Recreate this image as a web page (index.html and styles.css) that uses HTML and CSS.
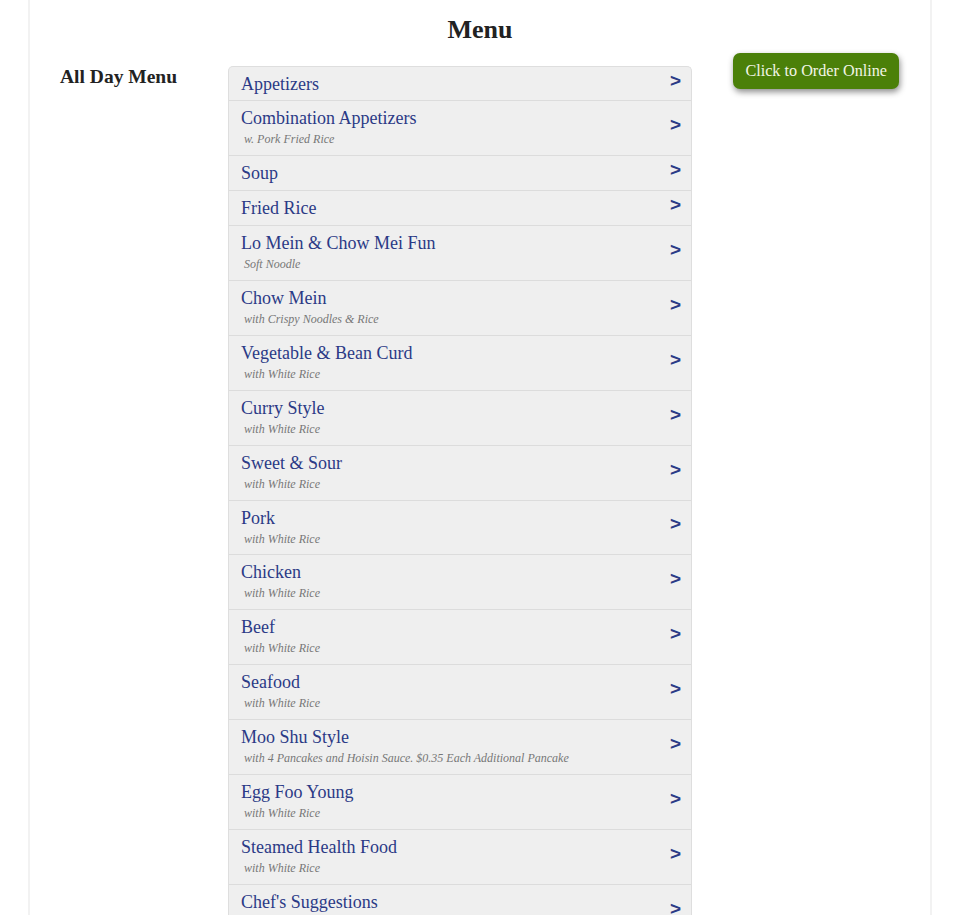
FILE: index.html
```html
<!DOCTYPE html>
<html>
<head>
<meta charset="utf-8">
<link rel="stylesheet" href="styles.css">
</head>
<body>
<div class="page">
  <h1 class="title">Menu</h1>
  <div class="layout">
    <div class="side"><h2 class="side-title">All Day Menu</h2></div>
    <ul class="list">
      <li class="row"><div class="info"><div class="name">Appetizers</div></div><span class="arrow">&gt;</span></li>
      <li class="row"><div class="info"><div class="name">Combination Appetizers</div><div class="sub">w. Pork Fried Rice</div></div><span class="arrow">&gt;</span></li>
      <li class="row"><div class="info"><div class="name">Soup</div></div><span class="arrow">&gt;</span></li>
      <li class="row"><div class="info"><div class="name">Fried Rice</div></div><span class="arrow">&gt;</span></li>
      <li class="row"><div class="info"><div class="name">Lo Mein &amp; Chow Mei Fun</div><div class="sub">Soft Noodle</div></div><span class="arrow">&gt;</span></li>
      <li class="row"><div class="info"><div class="name">Chow Mein</div><div class="sub">with Crispy Noodles &amp; Rice</div></div><span class="arrow">&gt;</span></li>
      <li class="row"><div class="info"><div class="name">Vegetable &amp; Bean Curd</div><div class="sub">with White Rice</div></div><span class="arrow">&gt;</span></li>
      <li class="row"><div class="info"><div class="name">Curry Style</div><div class="sub">with White Rice</div></div><span class="arrow">&gt;</span></li>
      <li class="row"><div class="info"><div class="name">Sweet &amp; Sour</div><div class="sub">with White Rice</div></div><span class="arrow">&gt;</span></li>
      <li class="row"><div class="info"><div class="name">Pork</div><div class="sub">with White Rice</div></div><span class="arrow">&gt;</span></li>
      <li class="row"><div class="info"><div class="name">Chicken</div><div class="sub">with White Rice</div></div><span class="arrow">&gt;</span></li>
      <li class="row"><div class="info"><div class="name">Beef</div><div class="sub">with White Rice</div></div><span class="arrow">&gt;</span></li>
      <li class="row"><div class="info"><div class="name">Seafood</div><div class="sub">with White Rice</div></div><span class="arrow">&gt;</span></li>
      <li class="row"><div class="info"><div class="name">Moo Shu Style</div><div class="sub">with 4 Pancakes and Hoisin Sauce. $0.35 Each Additional Pancake</div></div><span class="arrow">&gt;</span></li>
      <li class="row"><div class="info"><div class="name">Egg Foo Young</div><div class="sub">with White Rice</div></div><span class="arrow">&gt;</span></li>
      <li class="row"><div class="info"><div class="name">Steamed Health Food</div><div class="sub">with White Rice</div></div><span class="arrow">&gt;</span></li>
      <li class="row"><div class="info"><div class="name">Chef's Suggestions</div><div class="sub">with White Rice</div></div><span class="arrow">&gt;</span></li>
    </ul>
    <div class="aside"><a class="order-btn" href="#">Click to Order Online</a></div>
  </div>
</div>
</body>
</html>
```

FILE: styles.css
```css
html, body {
  margin: 0;
  padding: 0;
  background: #fff;
  font-family: "Liberation Serif", "Times New Roman", serif;
  color: #222;
}
.page {
  margin: 0 28px;
  border-left: 2px solid #f2f2f2;
  border-right: 2px solid #f2f2f2;
  min-height: 915px;
  box-sizing: border-box;
}
.title {
  margin: 0;
  padding-top: 15px;
  height: 30px;
  line-height: 30px;
  font-size: 26px;
  font-weight: bold;
  text-align: center;
  color: #222;
}
.layout {
  display: flex;
  align-items: flex-start;
  margin-top: 21px;
}
.side {
  width: 168px;
  padding-left: 30px;
}
.side-title {
  margin: 0;
  font-size: 19.5px;
  line-height: 22px;
  font-weight: bold;
  color: #222;
}
.list {
  list-style: none;
  margin: 0;
  padding: 0;
  width: 462px;
  border: 1px solid #dedede;
  border-bottom: none;
  border-radius: 5px 5px 0 0;
  background: #efefef;
  overflow: hidden;
}
.row {
  display: flex;
  align-items: center;
  padding: 7px 10px 7px 12px;
  border-top: 1px solid #dcdcdc;
}
.row:first-child {
  border-top: none;
  padding-bottom: 6px;
}
.info {
  flex: 1;
}
.name {
  font-size: 18px;
  line-height: 20px;
  color: #2b3a86;
}
.sub {
  font-size: 12px;
  line-height: 16.92px;
  padding-top: 3px;
  font-style: italic;
  color: #777;
  padding-left: 3px;
}
.arrow {
  font-family: "Liberation Sans", Arial, sans-serif;
  font-weight: bold;
  font-size: 19px;
  line-height: 20px;
  color: #2b3a86;
  position: relative;
  top: -3px;
}
.aside {
  flex: 1;
  display: flex;
  justify-content: flex-end;
  padding-right: 31px;
  margin-top: -13px;
}
.order-btn {
  display: inline-block;
  background: #4b8009;
  color: #f2f5e6;
  text-decoration: none;
  font-size: 16.2px;
  line-height: 36px;
  padding: 0 12px 0 12px;
  border-radius: 7px;
  box-shadow: 1px 3px 6px rgba(0,0,0,0.45);
}
```
